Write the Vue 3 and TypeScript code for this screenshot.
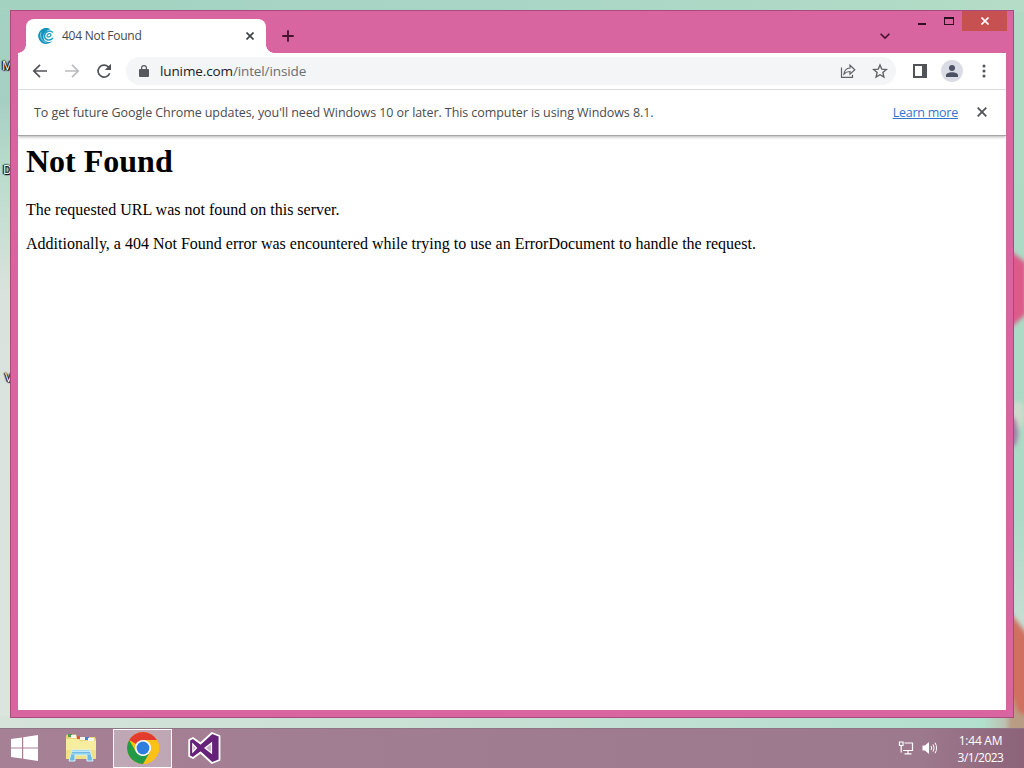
<template>
  <div class="desktop">
    <div class="workspace">
      <svg class="wallpaper" viewBox="0 0 1024 728">
        <defs>
          <linearGradient id="sky" x1="0" y1="0" x2="0" y2="1">
            <stop offset="0" stop-color="#a3d2c1" />
            <stop offset="0.14" stop-color="#a6cfc4" />
            <stop offset="0.23" stop-color="#b9dccb" />
            <stop offset="0.4" stop-color="#d9e2dc" />
            <stop offset="1" stop-color="#dbe5de" />
          </linearGradient>
          <linearGradient id="mint" x1="0" y1="0" x2="0" y2="1">
            <stop offset="0" stop-color="#b0dac4" />
            <stop offset="0.7" stop-color="#abdac5" />
            <stop offset="0.85" stop-color="#c5ddd2" />
            <stop offset="1" stop-color="#b9ab9b" />
          </linearGradient>
          <linearGradient id="top" x1="0" y1="0" x2="1" y2="0">
            <stop offset="0" stop-color="#a3d2c1" />
            <stop offset="0.5" stop-color="#a9d5c6" />
            <stop offset="1" stop-color="#b4dcc6" />
          </linearGradient>
          <linearGradient id="ground" x1="0" y1="0" x2="1" y2="0">
            <stop offset="0" stop-color="#d5e3da" />
            <stop offset="0.5" stop-color="#c6e0d4" />
            <stop offset="0.96" stop-color="#b2e0cf" />
            <stop offset="1" stop-color="#c3a896" />
          </linearGradient>
          <filter id="soft" x="-50%" y="-50%" width="200%" height="200%">
            <feGaussianBlur stdDeviation="2" />
          </filter>
        </defs>
        <rect width="512" height="728" fill="url(#sky)" />
        <rect x="512" width="512" height="728" fill="url(#mint)" />
        <rect width="1024" height="12" fill="url(#top)" />
        <rect y="716" width="1024" height="12" fill="url(#ground)" />
        <g filter="url(#soft)">
          <path d="M1008 249 L1026 263 V314 L1008 330 Z" fill="#dc5a88" />
          <ellipse cx="1018" cy="415" rx="6" ry="14" fill="#cfdccb" />
          <ellipse cx="1012" cy="432" rx="6" ry="15" fill="#a27ba8" />
          <path d="M1010 612 L1028 636 V728 L1018 722 L1010 690 Z" fill="#cf7060" />
          <path d="M1010 690 L1018 712 L1028 716 V732 H1008 Z" fill="#b99c84" />
        </g>
      </svg>

      <span
        v-for="label in desktopLabels"
        :key="label.text"
        class="desktop-label"
        :style="{ left: `${label.x}px`, top: `${label.y}px` }"
      >{{ label.text }}</span>

      <section class="window">
        <header class="title-bar">
          <div class="tab">
            <svg class="favicon" viewBox="0 0 16 16">
              <path d="M12.500 1.200 A8 8 0 1 0 14.500 12.800 C12.500 14.300 9.500 14.500 7.500 13 C4 10.300 4.500 3.500 12.500 1.200 Z" fill="#1593bd" />
              <path d="M14.800 4.500 C12 1.500 6.500 3.500 6.500 8 C6.500 12.300 12 13.500 15 10" fill="none" stroke="#1fa0c5" stroke-width="1.500" />
              <path d="M9 8.500 C11 9.800 13.500 8 12.800 6.300 C11.800 4.800 8.800 6 9 8.500" fill="none" stroke="#1fa0c5" stroke-width="1.200" />
              <path d="M3 4.500 C1.500 9 4 13.500 8.500 14.500" fill="none" stroke="#bce4ef" stroke-width="0.700" />
            </svg>
            <span class="tab-title">404 Not Found</span>
            <svg class="tab-close" viewBox="0 0 8 8">
              <path d="M0.500 0.500 L7.500 7.500 M7.500 0.500 L0.500 7.500" />
            </svg>
          </div>
          <svg class="new-tab" viewBox="0 0 12 12">
            <path d="M6 0.300 V11.700 M0.300 6 H11.700" />
          </svg>
          <svg class="tab-search" viewBox="0 0 10 6">
            <path d="M0.600 0.700 L5 5.100 L9.400 0.700" />
          </svg>
          <div class="controls">
            <svg class="minimize" viewBox="0 0 8 2"><path d="M0 0 H8 V2 H0 Z" /></svg>
            <svg class="maximize" viewBox="0 0 10 8">
              <path d="M0 0 H10 V8 H0 Z M1 2 V7 H9 V2 Z" fill-rule="evenodd" />
            </svg>
            <div class="close">
              <svg viewBox="0 0 8 8"><path d="M0.500 0.500 L7.500 7.500 M7.500 0.500 L0.500 7.500" /></svg>
            </div>
          </div>
        </header>

        <div class="toolbar">
          <svg class="nav-icon" viewBox="0 0 16 16">
            <path d="M15 8 H2.200 M8 1.800 L1.800 8 L8 14.200" />
          </svg>
          <svg class="nav-icon disabled" viewBox="0 0 16 16">
            <path d="M1 8 H13.800 M8 1.800 L14.200 8 L8 14.200" />
          </svg>
          <svg class="nav-icon" viewBox="0 0 16 16">
            <path d="M13.700 10.200 A6 6 0 1 1 12.300 3.800 L13.500 5" />
            <path class="solid" d="M15 0.800 V7 H8.800 Z" />
          </svg>
          <div class="address">
            <svg class="lock" viewBox="0 0 10 12">
              <path d="M1 4 H2 V3 A3 3 0 0 1 8 3 V4 H9 A1 1 0 0 1 10 5 V11 A1 1 0 0 1 9 12 H1 A1 1 0 0 1 0 11 V5 A1 1 0 0 1 1 4 Z M3.200 4 H6.800 V3 A1.800 1.800 0 0 0 3.200 3 Z" fill-rule="evenodd" />
            </svg>
            <span class="url">lunime.com<span class="url-path">/intel/inside</span></span>
            <svg class="address-icon" viewBox="0 0 16 16">
              <path d="M1.500 4.500 V14.300 H12.500 V11.800" />
              <path d="M4 11 C4.300 7.500 6.500 5.300 10 5 V2.200 L14.800 6.800 L10 11.200 V8.500 C7.500 8.500 5.500 9.300 4 11 Z" />
            </svg>
            <svg class="address-icon star" viewBox="0 0 16 16">
              <path d="M8 2 L9.800 6.200 L14.300 6.600 L10.900 9.600 L11.900 14 L8 11.700 L4.100 14 L5.100 9.600 L1.700 6.600 L6.200 6.200 Z" />
            </svg>
          </div>
          <svg class="side-panel" viewBox="0 0 14 14">
            <path d="M0 0 H14 V14 H0 Z M2 2 V12 H9 V2 Z" fill-rule="evenodd" />
          </svg>
          <div class="avatar">
            <svg viewBox="0 0 12 12">
              <circle cx="6" cy="3" r="3" />
              <path d="M0 12 V10.300 C0 8.300 3 7.300 6 7.300 S12 8.300 12 10.300 V12 Z" />
            </svg>
          </div>
          <svg class="menu" viewBox="0 0 4 14">
            <circle cx="2" cy="2" r="1.500" />
            <circle cx="2" cy="7" r="1.500" />
            <circle cx="2" cy="12" r="1.500" />
          </svg>
        </div>

        <div class="infobar">
          <span class="infobar-text">To get future Google Chrome updates, you'll need Windows 10 or later. This computer is using Windows 8.1.</span>
          <a class="learn-more">Learn more</a>
          <svg class="infobar-close" viewBox="0 0 10 10">
            <path d="M0.700 0.700 L9.300 9.300 M9.300 0.700 L0.700 9.300" />
          </svg>
        </div>

        <main class="page">
          <h1>Not Found</h1>
          <p>The requested URL was not found on this server.</p>
          <p>Additionally, a 404 Not Found error was encountered while trying to use an ErrorDocument to handle the request.</p>
        </main>
      </section>
    </div>

    <footer class="taskbar">
      <svg class="start" viewBox="0 0 27 26">
        <path d="M0 4 L11 2.400 V12.400 H0 Z M12.200 2.200 L27 0 V12.400 H12.200 Z M0 13.600 H11 V23.600 L0 22 Z M12.200 13.600 H27 V26 L12.200 23.800 Z" fill="#fff" />
      </svg>
      <svg class="explorer" viewBox="0 0 32 30">
        <path d="M1 3 L2 1.500 H11 L12 4 H30 L31 6 V26 H1 Z" fill="#e9d57c" />
        <path d="M3 1 H7 V4 H3 Z" fill="#4c9d4c" />
        <path d="M12 3 H15 V6 H12 Z" fill="#d0603e" />
        <path d="M20 4 H24 V7 H20 Z" fill="#4684c4" />
        <path d="M6 2 H11 V5 H6 Z M15 4 H20 V7 H15 Z M23 5 H29 V8 H23 Z" fill="#f8f7ef" />
        <path d="M1 6 H13 L15 8 H31 V26 H1 Z" fill="#f7ed9f" />
        <path d="M1 17 H31 V26 H1 Z" fill="#f0e186" />
        <path d="M4 28 L7 17 H25 L28 28 H22 V22 H10 V28 Z" fill="#6dbbe3" stroke="#d7f1fa" />
        <path d="M7 18.500 H25 M6.500 21 H25.500" stroke="#bee8f7" stroke-width="1" />
      </svg>
      <div class="task-active">
        <svg viewBox="0 0 32 32">
          <circle cx="16" cy="16" r="16" fill="#fbc116" />
          <path d="M16 16 L2.150 8 A16 16 0 0 1 29.850 8 Z" fill="#e33b2e" />
          <path d="M16 8 H29.850 A16 16 0 0 1 16 32 L22.930 20 Z" fill="#fbc116" />
          <path d="M2.150 8 L9.070 20 L16 24 L22.930 20 L16 32 A16 16 0 0 1 2.150 8 Z" fill="#249a48" />
          <circle cx="16" cy="16" r="8" fill="#fff" />
          <circle cx="16" cy="16" r="6.400" fill="#2f7de1" />
        </svg>
      </div>
      <svg class="visual-studio" viewBox="0 0 33 32">
        <path d="M24 1 L31.500 4 V28 L24 31 L12.500 20.500 L5 26 L1.200 24 V8 L5 6 L12.500 11.500 Z" fill="#68217a" stroke="#fff" stroke-width="1.800" stroke-linejoin="round" />
        <path d="M4.800 12 V20 L8.500 16 Z M23.500 11 L17 16 L23.500 21 Z" fill="#c8b2c6" stroke="#fff" stroke-width="1.200" />
      </svg>
      <svg class="network" viewBox="0 0 16 14">
        <path d="M6.500 2 H14.500 V9.500 H5 M10 9.500 V12.500 M6.500 12.800 H13.500 M1.500 1 H5 V4.500 H1.500 Z M3.200 4.500 V11.500" />
      </svg>
      <svg class="volume" viewBox="0 0 16 14">
        <path class="speaker" d="M0.500 4.500 H3 L7 1 V13 L3 9.500 H0.500 Z" />
        <path d="M9 5 Q10.400 7 9 9 M11 3.300 Q13.300 7 11 10.700 M13 1.700 Q16.200 7 13 12.300" />
      </svg>
      <div class="clock">
        <span>1:44 AM</span>
        <span class="date">3/1/2023</span>
      </div>
    </footer>
  </div>
</template>

<script setup lang="ts">
interface DesktopLabel {
  text: string
  x: number
  y: number
}

const desktopLabels: DesktopLabel[] = [
  { text: 'M', x: 2, y: 58 },
  { text: 'D', x: 3, y: 162 },
  { text: 'V', x: 5, y: 370 }
]
</script>

<style>
body {
  overflow: hidden;
}
</style>

<style scoped>
.desktop {
  display: flex;
  flex-direction: column;
  width: 1024px;
  height: 768px;
  font-family: "Open Sans", "Noto Sans", sans-serif;
  overflow: hidden;
}

.desktop * {
  box-sizing: border-box;
}

svg {
  display: block;
  flex: none;
}

.workspace {
  position: relative;
  height: 728px;
}

.wallpaper {
  width: 1024px;
  height: 728px;
}

.desktop-label {
  position: absolute;
  color: #fff;
  font-size: 12px;
  line-height: 16px;
  text-shadow: 0 0 2px #000, 1px 1px 1px #000, -1px 0 1px #000, 0 0 2px #000;
}

.window {
  position: absolute;
  left: 10px;
  top: 10px;
  display: flex;
  flex-direction: column;
  width: 1004px;
  height: 708px;
  padding: 0 7px 7px;
  background: #d8659f;
  border: 1px solid #a84a7b;
}

.title-bar {
  display: flex;
  height: 42px;
  padding-left: 8px;
}

.tab {
  position: relative;
  display: flex;
  align-items: center;
  width: 240px;
  height: 34px;
  margin-top: 8px;
  padding: 0 12px;
  background: #fff;
  border-radius: 8px 8px 0 0;
}

.tab::before,
.tab::after {
  content: "";
  position: absolute;
  bottom: 0;
  width: 8px;
  height: 8px;
}

.tab::before {
  left: -8px;
  background: radial-gradient(circle at 0 0, transparent 7.5px, #fff 8px);
}

.tab::after {
  right: -8px;
  background: radial-gradient(circle at 100% 0, transparent 7.5px, #fff 8px);
}

.favicon {
  width: 16px;
  height: 16px;
}

.tab-title {
  flex: 1;
  margin-left: 8px;
  color: #45484b;
  font-size: 12px;
  line-height: 16px;
  letter-spacing: -0.25px;
}

.tab-close {
  width: 8px;
  height: 8px;
  fill: none;
  stroke: #3c4043;
  stroke-width: 1.6;
}

.new-tab {
  width: 12px;
  height: 12px;
  margin: 19px 0 0 16px;
  stroke: #45122f;
  stroke-width: 1.8;
}

.tab-search {
  width: 10px;
  height: 6px;
  margin: 22px 28px 0 auto;
  fill: none;
  stroke: #45122f;
  stroke-width: 1.6;
}

.controls {
  display: flex;
  height: 20px;
  margin-right: -1px;
}

.minimize {
  width: 8px;
  height: 2px;
  margin-top: 12px;
  fill: #2c101f;
}

.maximize {
  width: 10px;
  height: 8px;
  margin: 6px 8px 0 18px;
  fill: #2c101f;
}

.close {
  display: flex;
  align-items: center;
  justify-content: center;
  width: 45px;
  height: 20px;
  background: #c75050;
}

.close svg {
  width: 8px;
  height: 8px;
  stroke: #fff;
  stroke-width: 1.6;
}

.toolbar {
  display: flex;
  align-items: center;
  height: 37px;
  padding: 0 20px 0 14px;
  background: #fff;
  border-bottom: 1px solid #dadce0;
}

.nav-icon {
  width: 16px;
  height: 16px;
  margin-right: 16px;
  fill: none;
  stroke: #505357;
  stroke-width: 1.7;
}

.nav-icon.disabled {
  stroke: #babcbe;
}

.nav-icon .solid {
  fill: #505357;
  stroke: none;
}

.address {
  display: flex;
  align-items: center;
  width: 770px;
  height: 28px;
  margin-left: -2px;
  padding: 0 8px 0 13px;
  background: #f3f5f6;
  border-radius: 14px;
}

.lock {
  width: 10px;
  height: 12px;
  fill: #55585c;
}

.url {
  flex: 1;
  margin-left: 11px;
  padding-bottom: 1px;
  color: #202124;
  font-size: 13.5px;
  line-height: 20px;
  letter-spacing: -0.12px;
}

.url-path {
  color: #6b6e72;
}

.address-icon {
  width: 16px;
  height: 16px;
  fill: none;
  stroke: #5f6368;
  stroke-width: 1.2;
}

.address-icon.star {
  margin-left: 16px;
  stroke-width: 1.4;
}

.side-panel {
  width: 14px;
  height: 14px;
  margin-left: 17px;
  fill: #505357;
}

.avatar {
  display: flex;
  align-items: center;
  justify-content: center;
  width: 22px;
  height: 22px;
  margin-left: 14px;
  background: #dadce5;
  border-radius: 50%;
}

.avatar svg {
  width: 12px;
  height: 12px;
  fill: #4c5263;
}

.menu {
  width: 4px;
  height: 14px;
  margin-left: auto;
  fill: #505357;
}

.infobar {
  position: relative;
  display: flex;
  align-items: center;
  height: 46px;
  padding: 0 19px 1px 16px;
  background: #fff;
  border-bottom: 1px solid #a6a6a6;
  box-shadow: 0 1px 3px rgba(0, 0, 0, 0.3);
  clip-path: inset(0 0 -5px 0);
  font-size: 12.5px;
  line-height: 18px;
}

.infobar-text {
  padding-top: 2px;
  color: #4a4c4f;
  letter-spacing: -0.075px;
  white-space: nowrap;
}

.learn-more {
  margin-left: auto;
  padding-top: 2px;
  color: #3474cf;
  letter-spacing: -0.25px;
  text-decoration: underline;
  white-space: nowrap;
}

.infobar-close {
  width: 10px;
  height: 10px;
  margin-left: 19px;
  stroke: #505357;
  stroke-width: 1.8;
}

.page {
  flex: 1;
  padding: 7px 8px;
  background: #fff;
  color: #000;
  font-family: "Liberation Serif", "Times New Roman", serif;
  font-size: 16px;
}

h1 {
  margin: 0 0 22px;
  font-size: 32px;
  line-height: 36px;
}

p {
  margin: 0 0 16px;
  line-height: 18px;
  white-space: nowrap;
}

.taskbar {
  display: flex;
  align-items: center;
  height: 40px;
  padding: 0 20px 1px 11px;
  background: linear-gradient(90deg, #a68196 0%, #a07c90 50%, #9d798e 90%, #8c6379 100%);
  border-top: 1px solid #8d7585;
  box-sizing: border-box;
}

.start {
  width: 27px;
  height: 26px;
}

.explorer {
  width: 32px;
  height: 30px;
  margin-left: 27px;
}

.task-active {
  display: flex;
  align-items: center;
  justify-content: center;
  width: 59px;
  height: 39px;
  margin-left: 16px;
  background: #bfa7b5;
  border: 1px solid #fff;
}

.task-active svg {
  width: 32px;
  height: 32px;
}

.visual-studio {
  width: 33px;
  height: 32px;
  margin-left: 16px;
}

.network {
  width: 16px;
  height: 14px;
  margin-left: auto;
  fill: none;
  stroke: #fff;
  stroke-width: 1.2;
}

.volume {
  width: 16px;
  height: 14px;
  margin-left: 8px;
  fill: none;
  stroke: #fff;
  stroke-width: 1;
}

.speaker {
  fill: #fff;
  stroke: none;
}

.clock {
  display: flex;
  flex-direction: column;
  align-items: center;
  width: 47px;
  margin-left: 19px;
  padding-top: 1px;
  color: #fff;
  font-size: 12px;
  line-height: 17px;
  letter-spacing: -0.25px;
  white-space: nowrap;
}

.date {
  letter-spacing: -0.5px;
}
</style>
